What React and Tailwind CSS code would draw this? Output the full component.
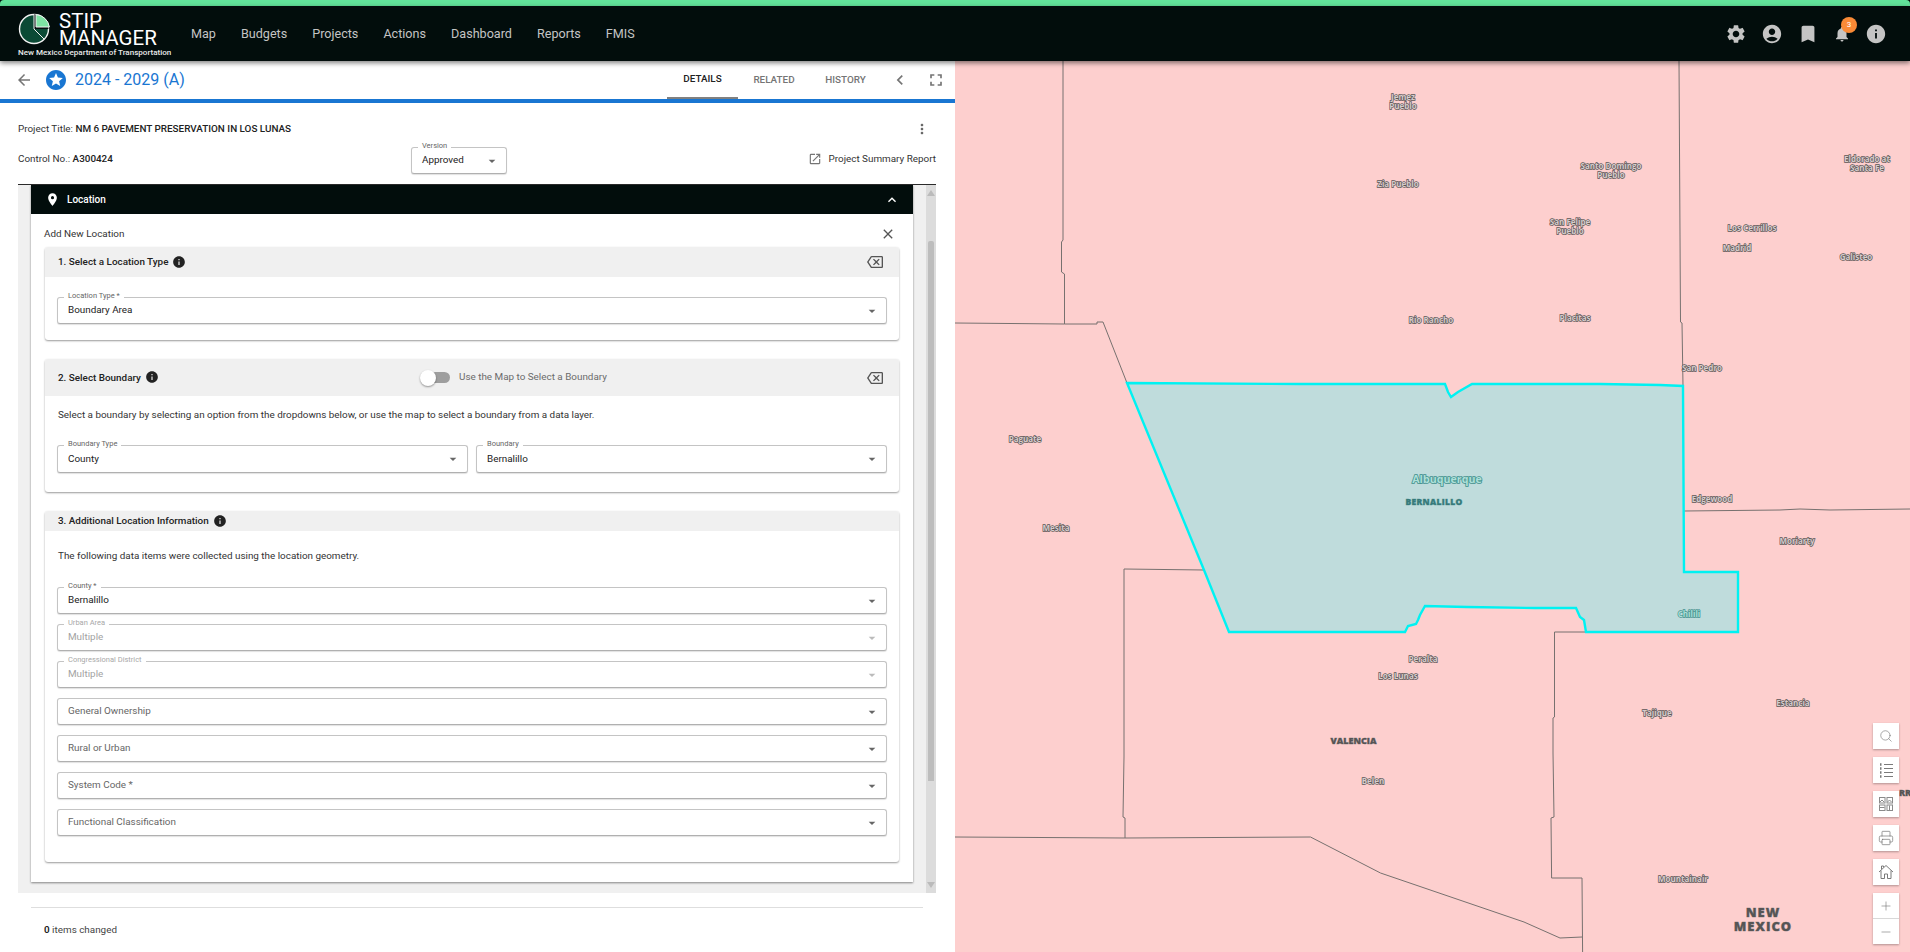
import React from "react";
import {
  MdSettings, MdAccountCircle, MdBookmark, MdNotifications, MdInfo, MdArrowBack, MdStars,
  MdFullscreen, MdChevronLeft, MdMoreVert, MdOpenInNew, MdPlace, MdExpandLess, MdClose,
  MdOutlineBackspace, MdArrowDropDown,
} from "react-icons/md";
import { Search, Printer, Plus, Minus } from "lucide-react";

const NAV = ["Map", "Budgets", "Projects", "Actions", "Dashboard", "Reports", "FMIS"];

const LABELS = [
  ["Jemez", 1403, 98], ["Pueblo", 1403, 107], ["Zia Pueblo", 1398, 185],
  ["Santo Domingo", 1611, 167], ["Pueblo", 1611, 176], ["San Felipe", 1570, 223], ["Pueblo", 1570, 232],
  ["Los Cerrillos", 1752, 229], ["Madrid", 1737, 249], ["Galisteo", 1856, 258],
  ["Eldorado at", 1867, 160], ["Santa Fe", 1867, 169], ["Rio Rancho", 1431, 321], ["Placitas", 1575, 319],
  ["San Pedro", 1702, 369], ["Paguate", 1025, 440], ["Edgewood", 1712, 500], ["Mesita", 1056, 529],
  ["Moriarty", 1797, 542], ["Peralta", 1423, 660], ["Los Lunas", 1398, 677], ["Estancia", 1793, 704],
  ["Tajique", 1657, 714], ["Belen", 1373, 782], ["Mountainair", 1683, 880],
];

const POLY = "1127,383 1300,384 1445,384 1448,392 1451,397 1458,392 1472,384 1600,384 1660,385 1683,386 1684,572 1738,572 1738,632 1586,632 1584,620 1580,617 1576,608 1535,608 1467,607 1425,606 1420,615 1418,620 1416,624 1408,626 1405,632 1229,632 1204,570";

const LINES = [
  "1063,61 1063,240 1061.5,242 1061.5,272 1064.5,274 1064.5,324",
  "955,323 1064.5,324 1097,324 1097,322 1103,322 1127,383",
  "1679,61 1680.5,322 1682,323 1683,386",
  "1684,511 1780,510 1800,509 1830,510 1910,509",
  "1124,569 1204,570",
  "1124,569 1124,757 1123,817 1125,818 1125,838",
  "955,837 1125,838 1310.5,837 1380.5,873 1524,922 1560,938 1582,937",
  "1554.5,632 1585,632",
  "1554.5,632 1554.5,717 1553,718 1553,753 1554,817 1551,818 1551.6,878 1582,878 1582.6,952",
];

function FieldSelect({ label, value, muted, placeholder, tall, className = "" }) {
  return (
    <div className={`relative ${tall ? "h-[28px]" : "h-[27px]"} rounded-[3px] border border-[#c4c4c4] border-b-[#b0b0b0] bg-white flex items-center pl-[10px] pr-[6px] shadow-[0_1px_1px_rgba(0,0,0,0.12)] ${className}`}>
      {label && (
        <span className={`absolute -top-[7px] left-[6px] bg-white px-[4px] text-[7.5px] leading-[10px] ${muted ? "text-[#a8a8a8]" : "text-[#666]"}`}>
          {label}
        </span>
      )}
      <span className={`flex-1 text-[9.9px] ${placeholder ? "text-[#666]" : muted ? "text-[#a3a3a3]" : "text-[#222]"}`}>
        {value}
      </span>
      <MdArrowDropDown className={`text-[16px] ${muted ? "text-[#bbb]" : "text-[#666]"}`} />
    </div>
  );
}

function SectionTitle({ children }) {
  return (
    <div className="flex items-center gap-[4px]">
      <span className="pt-[1px] text-[9.9px] font-medium text-[#222]">{children}</span>
      <MdInfo className="text-[14px] text-[#222]" />
    </div>
  );
}

function MapButton({ children }) {
  return (
    <div className="w-[26px] h-[26px] bg-white flex items-center justify-center text-[#6e6e6e] shadow-[0_1px_2px_rgba(0,0,0,0.3)]">
      {children}
    </div>
  );
}

function GridIcon() {
  return (
    <svg width="14" height="14" viewBox="0 0 14 14" fill="none" stroke="#8a8a8a" strokeWidth="1">
      <rect x="0.5" y="0.5" width="5.5" height="5.5" />
      <rect x="8" y="0.5" width="5.5" height="5.5" />
      <rect x="0.5" y="8" width="5.5" height="5.5" />
      <rect x="8" y="8" width="5.5" height="5.5" />
      <path d="M1 5 3 3l2 2M8.5 5 10.5 3l2 2M1 10.5h4.5M10.5 8.5v4.5" />
    </svg>
  );
}

function ListIcon() {
  return (
    <svg width="16" height="16" viewBox="0 0 16 16" fill="none" stroke="#7a7a7a" strokeWidth="1">
      <path d="M6 2.5h9M6 6.5h9M6 10.5h9M6 14.5h9" />
      <path d="M2 2.5h1.5M2 6.5h1.5M2 10.5h1.5M2 14.5h1.5" strokeWidth="2.4" />
    </svg>
  );
}

function HomeIcon() {
  return (
    <svg width="16" height="16" viewBox="0 0 16 16" fill="none" stroke="#7a7a7a" strokeWidth="1">
      <path d="M1 8 8 1.5 15 8M3 6.5V14.5H6.5V10H9.5V14.5H13V6.5M3.5 5V2H5.5V3.2" />
    </svg>
  );
}

function Logo() {
  return (
    <svg width="32" height="32" viewBox="0 0 32 32" className="shrink-0">
      <circle cx="16" cy="16" r="14.5" fill="#0b4a35" stroke="#f2f2f2" strokeWidth="1.4" />
      <path d="M16 16V1.5A14.5 14.5 0 0 1 30.5 16Z" fill="#020d0c" />
      <path d="M18 14V1.6A14.5 14.5 0 0 1 31.4 14Z" fill="#7fe3a4" stroke="#f2f2f2" strokeWidth="1" />
      <path d="M16 2V16L26 26" fill="none" stroke="#f2f2f2" strokeWidth="1" />
    </svg>
  );
}

function MapView() {
  return (
    <svg className="absolute inset-0 w-full h-full font-['Open_Sans',sans-serif]" viewBox="955 61 955 891">
      <rect x="955" y="61" width="955" height="891" fill="#fdcfce" />
      <polygon points={POLY} fill="#bfdcdc" />
      <g fill="none" stroke="#77716f" strokeWidth="1">
        {LINES.map((p, i) => <polyline key={i} points={p} />)}
      </g>
      <polygon points={POLY} fill="none" stroke="#00f2f2" strokeWidth="2.4" />
      <g textAnchor="middle" dominantBaseline="middle" fontSize="8" fontWeight="700" fill="#d6cccc" stroke="#5a5555" strokeWidth="1.3" paintOrder="stroke">
        {LABELS.map(([t, x, y], i) => <text key={i} x={x} y={y}>{t}</text>)}
      </g>
      <g textAnchor="middle" dominantBaseline="middle" fontWeight="800" fill="#555" stroke="#8a8080" strokeWidth="0.5" paintOrder="stroke">
        <text x="1353.5" y="742" fontSize="9">VALENCIA</text>
        <text x="1763" y="914" fontSize="13" letterSpacing="1">NEW</text>
        <text x="1763" y="928" fontSize="13" letterSpacing="1">MEXICO</text>
        <text x="1905" y="794" fontSize="9">RR</text>
      </g>
      <g textAnchor="middle" dominantBaseline="middle" paintOrder="stroke">
        <text x="1447" y="480" fontSize="10.7" fontWeight="700" fill="#aee0da" stroke="#3f8f8c" strokeWidth="1.6">Albuquerque</text>
        <text x="1434" y="503" fontSize="8.5" fontWeight="800" fill="#367a7a" stroke="#5a9a9a" strokeWidth="0.5" letterSpacing="0.3">BERNALILLO</text>
        <text x="1689" y="615" fontSize="8" fontWeight="700" fill="#aee0da" stroke="#3f8f8c" strokeWidth="1.3">Chilili</text>
      </g>
    </svg>
  );
}

export default function App() {
  return (
    <div className="h-screen w-full flex flex-col overflow-hidden bg-[#020d0c] font-['Roboto',sans-serif]">
      <div className="h-[6px] shrink-0 bg-[#62e39b] rounded-t-[4px]" />

      <header className="relative z-20 h-[55px] shrink-0 flex items-center bg-[#020d0c] shadow-[0_2px_5px_rgba(0,0,0,0.5)]">
        <div className="relative w-[191px] h-full shrink-0">
          <div className="absolute left-[18px] top-[7px]"><Logo /></div>
          <div className="absolute left-[59px] top-[7px] text-white text-[20.5px] leading-[17px]">
            <div>STIP</div>
            <div>MANAGER</div>
          </div>
          <div className="absolute left-[18px] top-[42px] text-[#e8e8e8] text-[8.05px] leading-[9px] font-medium whitespace-nowrap">
            New Mexico Department of Transportation
          </div>
        </div>
        <nav className="flex items-center gap-[25px] pt-[1px] text-[12.6px] text-[#c4c4c4]">
          {NAV.map((n) => <span key={n}>{n}</span>)}
        </nav>
        <div className="ml-auto flex items-center gap-[14px] pr-[23px] text-[#c4c4c4] text-[22px]">
          <MdSettings />
          <MdAccountCircle />
          <MdBookmark />
          <div className="relative">
            <MdNotifications className="text-[18px]" />
            <span className="absolute -top-[8px] left-[8px] w-[16px] h-[16px] rounded-full bg-[#f98a36] text-white text-[8px] flex items-center justify-center">3</span>
          </div>
          <MdInfo />
        </div>
      </header>

      <div className="flex-1 flex min-h-0">
        <main className="w-[955px] shrink-0 bg-white flex flex-col">
          <div className="h-[38px] shrink-0 flex items-center pl-[15px]">
            <MdArrowBack className="text-[18px] text-[#757575]" />
            <MdStars className="ml-[11px] text-[24px] text-[#1976d2]" />
            <span className="ml-[7px] text-[16px] text-[#1976d2]">2024 - 2029 (A)</span>
            <div className="ml-auto flex items-center h-full text-[9.9px] font-medium text-[#757575]">
              <span className="w-[71px] h-full flex items-center justify-center text-[#222] border-b-2 border-[#808080]">DETAILS</span>
              <span className="w-[72px] h-full flex items-center justify-center">RELATED</span>
              <span className="w-[71px] h-full flex items-center justify-center">HISTORY</span>
              <MdChevronLeft className="ml-[9px] text-[20px]" />
              <MdFullscreen className="ml-[16px] mr-[9px] text-[20px]" />
            </div>
          </div>
          <div className="h-[4px] shrink-0 bg-[#1976d2]" />

          <div className="h-[81px] shrink-0 flex flex-col pl-[18px] pr-[19px] pt-[18px] text-[#333]">
            <div className="flex items-center justify-between h-[16px] text-[9.9px]">
              <div>Project Title: <span className="font-medium text-[#222]">NM 6 PAVEMENT PRESERVATION IN LOS LUNAS</span></div>
              <MdMoreVert className="text-[16px] text-[#666] mr-[6px]" />
            </div>
            <div className="flex items-center h-[27px] mt-[10px] text-[9.9px]">
              <div className="w-[393px] pb-[2px]">Control No.: <span className="font-medium text-[#222]">A300424</span></div>
              <FieldSelect label="Version" value="Approved" className="w-[96px]" />
              <div className="ml-auto flex items-center gap-[7px] pb-[2px] text-[9.9px] text-[#333]">
                <MdOpenInNew className="text-[14px] text-[#757575]" />
                Project Summary Report
              </div>
            </div>
          </div>

          <div className="ml-[18px] mr-[19px] h-[709px] shrink-0 flex bg-[#f0f0f0] border-t border-[#2b2b2b]">
            <div className="ml-[13px] w-[882px] h-[697px] shrink-0 bg-white flex flex-col shadow-[0_1px_2px_rgba(0,0,0,0.45)]">
              <div className="h-[29px] shrink-0 bg-[#020d0c] text-white flex items-center pl-[14px] pr-[13px]">
                <MdPlace className="text-[15px]" />
                <span className="ml-[7px] text-[10px] font-medium">Location</span>
                <MdExpandLess className="ml-auto text-[16px]" />
              </div>
              <div className="h-[33px] shrink-0 flex items-center justify-between pl-[13px] pr-[17px] pt-[7px] text-[9.9px] text-[#333]">
                Add New Location
                <MdClose className="text-[16px] text-[#555]" />
              </div>

              <div className="mx-[14px] flex flex-col gap-[19px]">
                <section className="h-[93px] rounded-[3px] bg-white shadow-[0_1px_2px_rgba(0,0,0,0.4)] flex flex-col">
                  <div className="h-[30px] shrink-0 bg-[#f0f0f0] rounded-t-[3px] flex items-center justify-between pl-[13px] pr-[16px]">
                    <SectionTitle>1. Select a Location Type</SectionTitle>
                    <MdOutlineBackspace className="text-[16px] text-[#555]" />
                  </div>
                  <div className="pt-[20px] px-[12px]">
                    <FieldSelect label="Location Type *" value="Boundary Area" />
                  </div>
                </section>

                <section className="h-[133px] rounded-[3px] bg-white shadow-[0_1px_2px_rgba(0,0,0,0.4)] flex flex-col">
                  <div className="h-[37px] shrink-0 bg-[#f0f0f0] rounded-t-[3px] flex items-center pl-[13px] pr-[16px]">
                    <div className="w-[362px]"><SectionTitle>2. Select Boundary</SectionTitle></div>
                    <div className="relative w-[30px] h-[16px] flex items-center">
                      <div className="ml-[4px] w-[26px] h-[11px] rounded-full bg-[#9e9e9e]" />
                      <div className="absolute left-0 top-0 w-[16px] h-[16px] rounded-full bg-white shadow-[0_1px_2px_rgba(0,0,0,0.4)]" />
                    </div>
                    <span className="ml-[9px] text-[9.9px] text-[#6b6b6b]">Use the Map to Select a Boundary</span>
                    <MdOutlineBackspace className="ml-auto text-[16px] text-[#555]" />
                  </div>
                  <p className="mt-[12px] h-[14px] pl-[13px] text-[9.9px] leading-[14px] text-[#333]">
                    Select a boundary by selecting an option from the dropdowns below, or use the map to select a boundary from a data layer.
                  </p>
                  <div className="mt-[23px] px-[12px] grid grid-cols-2 gap-[8px]">
                    <FieldSelect label="Boundary Type" value="County" tall />
                    <FieldSelect label="Boundary" value="Bernalillo" tall />
                  </div>
                </section>

                <section className="h-[351px] rounded-[3px] bg-white shadow-[0_1px_2px_rgba(0,0,0,0.4)] flex flex-col">
                  <div className="h-[20px] shrink-0 bg-[#f0f0f0] rounded-t-[3px] flex items-center pl-[13px]">
                    <SectionTitle>3. Additional Location Information</SectionTitle>
                  </div>
                  <p className="mt-[18px] h-[14px] pl-[13px] text-[9.9px] leading-[14px] text-[#333]">
                    The following data items were collected using the location geometry.
                  </p>
                  <div className="mt-[24px] px-[12px] flex flex-col gap-[10px]">
                    <FieldSelect label="County *" value="Bernalillo" />
                    <FieldSelect label="Urban Area" value="Multiple" muted />
                    <FieldSelect label="Congressional District" value="Multiple" muted />
                    <FieldSelect value="General Ownership" placeholder />
                    <FieldSelect value="Rural or Urban" placeholder />
                    <FieldSelect value="System Code *" placeholder />
                    <FieldSelect value="Functional Classification" placeholder />
                  </div>
                </section>
              </div>
            </div>

            <div className="ml-[13px] w-[10px] shrink-0 bg-[#dcdcdc] flex flex-col items-center">
              <div className="mt-[5px] w-0 h-0 border-x-[4px] border-x-transparent border-b-[6px] border-b-[#bbbbbb]" />
              <div className="mt-[45px] w-[6px] h-[540px] rounded-t-[2px] bg-[#bdbdbd]" />
              <div className="mt-[101px] w-0 h-0 border-x-[4px] border-x-transparent border-t-[6px] border-t-[#bbbbbb]" />
            </div>
          </div>

          <div className="mx-[31px] mt-[14px] mr-[32px] border-t border-[#dedede] pt-[15px] pl-[13px] text-[9.9px] text-[#444]">
            <span className="font-semibold text-[#222]">0</span> items changed
          </div>
        </main>

        <section className="relative flex-1 overflow-hidden">
          <MapView />
          <div className="absolute left-[918px] top-[662px] flex flex-col gap-[8px]">
            <MapButton><Search size={14} strokeWidth={1} /></MapButton>
            <MapButton><ListIcon /></MapButton>
            <MapButton><GridIcon /></MapButton>
            <MapButton><Printer size={16} strokeWidth={1} /></MapButton>
            <MapButton><HomeIcon /></MapButton>
            <div className="flex flex-col divide-y divide-[#d8d8d8] shadow-[0_1px_2px_rgba(0,0,0,0.3)]">
              <div className="w-[26px] h-[26px] bg-white flex items-center justify-center text-[#6e6e6e]"><Plus size={14} strokeWidth={1} /></div>
              <div className="w-[26px] h-[25px] bg-white flex items-center justify-center text-[#6e6e6e]"><Minus size={14} strokeWidth={1} /></div>
            </div>
          </div>
        </section>
      </div>
    </div>
  );
}
